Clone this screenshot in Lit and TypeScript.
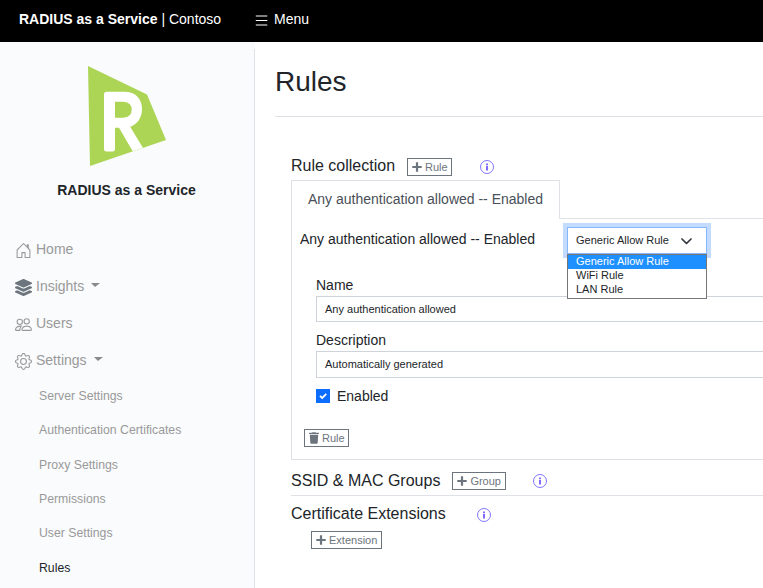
import { LitElement, html, css, svg } from "lit";
import { customElement, property } from "lit/decorators.js";

const icons: Record<string, unknown> = {
  home: svg`<svg viewBox="0 0 16 16" fill="#999"><path d="M7.646 1.146a.5.5 0 0 1 .708 0l6 6a.5.5 0 0 1 .146.354v7a.5.5 0 0 1-.5.5H9.5a.5.5 0 0 1-.5-.5v-4H7v4a.5.5 0 0 1-.5.5H2a.5.5 0 0 1-.5-.5v-7a.5.5 0 0 1 .146-.354l6-6zM2.5 7.707V14H6v-4a.5.5 0 0 1 .5-.5h3a.5.5 0 0 1 .5.5v4h3.5V7.707L8 2.207l-5.5 5.5z"/><path d="M13 2.5V6l-2-2V2.5a.5.5 0 0 1 .5-.5h1a.5.5 0 0 1 .5.5z"/></svg>`,
  insights: svg`<svg viewBox="0 0 512 512" fill="#6c757d"><path d="M12.41 148.02l232.94 105.67c6.8 3.09 14.49 3.09 21.29 0l232.94-105.67c16.55-7.51 16.55-32.52 0-40.03L266.65 2.31a25.607 25.607 0 0 0-21.29 0L12.41 107.98c-16.55 7.51-16.55 32.53 0 40.04zm487.18 88.28l-58.09-26.33-161.64 73.27c-7.56 3.43-15.59 5.17-23.86 5.17s-16.29-1.74-23.86-5.17L70.51 209.97l-58.1 26.33c-16.55 7.5-16.55 32.5 0 40l232.94 105.59c6.8 3.08 14.49 3.08 21.29 0L499.59 276.3c16.55-7.5 16.55-32.5 0-40zm0 127.8l-57.87-26.23-161.86 73.37c-7.56 3.43-15.59 5.17-23.86 5.17s-16.29-1.74-23.86-5.17L70.29 337.87 12.41 364.1c-16.55 7.5-16.55 32.5 0 40l232.94 105.59c6.8 3.08 14.49 3.08 21.29 0L499.59 404.1c16.55-7.5 16.55-32.5 0-40z"/></svg>`,
  users: svg`<svg viewBox="0 0 16 16" fill="#999"><path fill-rule="evenodd" d="M15 14s1 0 1-1-1-4-5-4-5 3-5 4 1 1 1 1h8zm-7.978-1A.261.261 0 0 1 7 12.996c.001-.264.167-1.03.76-1.72C8.312 10.629 9.282 10 11 10c1.717 0 2.687.63 3.24 1.276.593.69.758 1.457.76 1.72l-.008.002a.274.274 0 0 1-.014.002H7.022zM11 7a2 2 0 1 0 0-4 2 2 0 0 0 0 4zm3-2a3 3 0 1 1-6 0 3 3 0 0 1 6 0zM6.936 9.28a5.88 5.88 0 0 0-1.23-.247A7.35 7.35 0 0 0 5 9c-4 0-5 3-5 4 0 .667.333 1 1 1h4.216A2.238 2.238 0 0 1 5 13c0-1.01.377-2.042 1.09-2.904.243-.294.526-.569.846-.816zM4.92 10A5.493 5.493 0 0 0 4 13H1c0-.26.164-1.03.76-1.724.545-.636 1.492-1.256 3.16-1.275zM1.5 5.5a3 3 0 1 1 6 0 3 3 0 0 1-6 0zm3-2a2 2 0 1 0 0 4 2 2 0 0 0 0-4z"/></svg>`,
  settings: svg`<svg viewBox="0 0 16 16" fill="#999"><path d="M8 4.754a3.246 3.246 0 1 0 0 6.492 3.246 3.246 0 0 0 0-6.492zM5.754 8a2.246 2.246 0 1 1 4.492 0 2.246 2.246 0 0 1-4.492 0z"/><path d="M9.796 1.343c-.527-1.79-3.065-1.79-3.592 0l-.094.319a.873.873 0 0 1-1.255.52l-.292-.16c-1.64-.892-3.433.902-2.54 2.541l.159.292a.873.873 0 0 1-.52 1.255l-.319.094c-1.79.527-1.79 3.065 0 3.592l.319.094a.873.873 0 0 1 .52 1.255l-.16.292c-.892 1.64.901 3.434 2.541 2.54l.292-.159a.873.873 0 0 1 1.255.52l.094.319c.527 1.79 3.065 1.79 3.592 0l.094-.319a.873.873 0 0 1 1.255-.52l.292.16c1.64.893 3.434-.902 2.54-2.541l-.159-.292a.873.873 0 0 1 .52-1.255l.319-.094c1.79-.527 1.79-3.065 0-3.592l-.319-.094a.873.873 0 0 1-.52-1.255l.16-.292c.893-1.64-.902-3.433-2.541-2.54l-.292.159a.873.873 0 0 1-1.255-.52l-.094-.319zm-2.633.283c.246-.835 1.428-.835 1.674 0l.094.319a1.873 1.873 0 0 0 2.693 1.115l.291-.16c.764-.415 1.6.42 1.184 1.185l-.159.292a1.873 1.873 0 0 0 1.116 2.692l.318.094c.835.246.835 1.428 0 1.674l-.319.094a1.873 1.873 0 0 0-1.115 2.693l.16.291c.415.764-.42 1.6-1.185 1.184l-.291-.159a1.873 1.873 0 0 0-2.693 1.116l-.094.318c-.246.835-1.428.835-1.674 0l-.094-.319a1.873 1.873 0 0 0-2.692-1.115l-.292.16c-.764.415-1.6-.42-1.184-1.185l.159-.291A1.873 1.873 0 0 0 1.945 8.93l-.319-.094c-.835-.246-.835-1.428 0-1.674l.319-.094A1.873 1.873 0 0 0 3.06 4.377l-.16-.292c-.415-.764.42-1.6 1.185-1.184l.292.159a1.873 1.873 0 0 0 2.692-1.115l.094-.319z"/></svg>`,
  plus: svg`<svg viewBox="0 0 10 10" fill="#6c757d"><path d="M3.900 0.300h2.200v3.600H9.700v2.200H6.100V9.700H3.900V6.100H.3V3.900h3.600z"/></svg>`,
  trash: svg`<svg viewBox="0 0 10 12" fill="#6c757d"><path d="M0 1.300Q0 .8.5.8H3L3.500.2h3L7 .8h2.500q.5 0 .5.5V2H0zM.8 2.800h8.400L8.700 10.800q-.1.900-1 .900H2.300q-.9 0-1-.9z"/></svg>`,
  info: svg`<svg viewBox="0 0 14 14"><circle cx="7" cy="7" r="6.500" fill="none" stroke="#4a3cff" stroke-width=".7"/><path d="M6.300 3.500h1.400v1.400H6.300zM6.300 5.800h1.400V10.500H6.300z" fill="#4a2cff"/></svg>`,
};

@customElement("outline-button")
export class OutlineButton extends LitElement {
  @property() icon = "plus";
  @property() label = "";

  static styles = css`
    :host { display: block; flex: none; }
    .button {
      display: flex; align-items: center; box-sizing: border-box; width: 100%; height: 18px;
      padding: 0 0 0 4px; border: 1px solid #6c757d; background: #fff; margin: 0;
      color: #6c757d; font: 11px/16px "Liberation Sans", Arial, sans-serif; white-space: nowrap;
    }
    .icon { display: flex; flex: none; width: 10px; height: 10px; margin-right: 3px; }
    .icon.trash { height: 12px; }
    .icon svg { width: 100%; height: 100%; }
  `;

  render() {
    return html`<button class="button"><span class="icon ${this.icon}">${icons[this.icon]}</span>${this.label}</button>`;
  }
}

@customElement("app-root")
export class AppRoot extends LitElement {
  static styles = css`
    :host {
      display: block; height: 588px; overflow: hidden; background: #fff; color: #212529;
      font: 14px/21px "Liberation Sans", Arial, sans-serif;
    }
    * { box-sizing: border-box; }
    .topbar { display: flex; height: 42px; padding: 9px 0 0 19px; background: #000; color: #fff; }
    .brand { width: 236px; }
    .menu { display: flex; }
    .burger { width: 13px; height: 11px; margin: 6px 6px 0 0; }
    .body { display: flex; height: 546px; }
    .sidebar { flex: none; width: 255px; background: #f9fbfd; }
    .side-inner { height: 539px; margin-top: 7px; padding-top: 16px; border-right: 1px solid #dee2e6; }
    .logo { display: block; width: 80px; height: 102px; margin-left: 87px; }
    .product { width: 253px; margin-top: 13px; text-align: center; font-weight: bold; }
    .nav { display: flex; flex-direction: column; margin-top: 30px; }
    .item { display: flex; align-items: center; height: 37px; padding-left: 15px; color: #999; }
    .nav-icon { display: flex; width: 17px; height: 17px; margin: 1px 4px 0 0; }
    .nav-icon svg { width: 100%; height: 100%; }
    .caret { margin: -3px 0 0 7px; border: 0 solid transparent; border-top-color: #8a8a8a; border-width: 4px 5px 0 4px; }
    .sub { height: 34.300px; padding-left: 39px; font-size: 12.250px; line-height: 35px; color: #999; }
    .sub.active { padding-top: 1px; color: #212529; }
    .main { flex: 1; min-width: 0; padding-left: 20px; }
    h1 { height: 75px; margin: 0; padding-top: 23px; border-bottom: 1px solid #dee2e6; font-size: 28px; line-height: 34px; font-weight: normal; }
    .content { padding-left: 16px; }
    .heading { display: flex; font-size: 16px; line-height: 20px; }
    .info { width: 14px; height: 14px; display: flex; }
    .info svg { width: 100%; height: 100%; }
    .rules { height: 63px; padding-top: 39px; }
    .rules outline-button { width: 45px; margin: 2px 28px 0 12px; }
    .rules .info { margin-top: 4px; }
    .tabs { display: flex; height: 39px; }
    .tab { width: 269px; border: 1px solid #dee2e6; border-bottom: 0; padding: 8px 0 0 16px; color: #495057; }
    .tab-rest { flex: 1; border-bottom: 1px solid #dee2e6; }
    .panel { height: 241px; border: 1px solid #dee2e6; border-width: 0 0 1px 1px; padding-left: 8px; }
    .panel-head { display: flex; height: 56px; padding-top: 8px; line-height: 24px; }
    .summary { width: 267px; }
    .picker { position: relative; width: 140px; height: 27px; }
    .select {
      display: flex; align-items: center; justify-content: space-between; height: 27px; padding: 0 14px 2px 8px;
      border: 1px solid #86b7fe; background: #fff; box-shadow: 0 0 0 4px #c2dbfe; font-size: 11px;
    }
    .select svg { width: 11px; height: 7px; margin-top: 3px; }
    .options {
      position: absolute; top: 27px; left: 0; width: 140px; height: 45px; border: 1px solid #767676;
      background: #fff; font-size: 11px; line-height: 12px;
    }
    .option { height: 14px; padding-left: 8px; }
    .option.selected { background: #1e90ff; color: #fff; }
    .form { padding-left: 16px; }
    label { display: block; height: 21px; }
    .input { height: 26px; border: 1px solid #ced4da; border-right: 0; padding-left: 8px; font-size: 11px; line-height: 24px; }
    .input + label { margin-top: 8px; }
    .description { height: 27px; }
    .check { display: flex; margin-top: 8px; height: 21px; }
    .box { display: flex; width: 14px; height: 14px; margin: 3px 7px 0 0; background: #0d6efd; }
    .box svg { width: 14px; height: 14px; }
    .delete { display: flex; padding: 22px 0 0 4px; }
    .delete outline-button { width: 45px; }
    .groups { height: 36px; padding-top: 11px; border-bottom: 1px solid #dee2e6; }
    .groups outline-button { width: 54px; margin: 1px 27px 0 12px; }
    .groups .info { margin-top: 3px; }
    .extensions { padding-top: 8px; height: 35px; }
    .extensions .info { margin: 4px 0 0 31px; }
    .extension-action { display: flex; padding-left: 20px; }
    .extension-action outline-button { width: 71px; }
  `;

  private navItems = [
    { icon: "home", label: "Home", caret: false },
    { icon: "insights", label: "Insights", caret: true },
    { icon: "users", label: "Users", caret: false },
    { icon: "settings", label: "Settings", caret: true },
  ];
  private subItems = ["Server Settings", "Authentication Certificates", "Proxy Settings", "Permissions", "User Settings", "Rules"];
  private ruleTypes = ["Generic Allow Rule", "WiFi Rule", "LAN Rule"];

  render() {
    return html`
      <header class="topbar">
        <div class="brand"><b>RADIUS as a Service</b> | Contoso</div>
        <div class="menu">
          <svg class="burger" viewBox="0 0 13 11" stroke="#fff"><path d="M.8 1h11.500M.8 5.500h11.500M.8 10h11.500"/></svg>Menu
        </div>
      </header>
      <div class="body">
        <aside class="sidebar">
          <div class="side-inner">
            <svg class="logo" viewBox="0 0 80 102">
              <path d="M1 1L60 29.500L79 75L3 101z" fill="#add555"/>
              <path d="M17 29.500q0-2.800 2.800-2.800H37C49 26.700 55 34 55 44C55 53 50 59.500 43.200 61.700L55.900 82.700L45.700 86.300L32 62.700H28V84q0 2.500-2.500 2.500h-6q-2.500 0-2.500-2.500zM28 36.700V52.700H36.500Q44.700 52 44.700 44.700T36.500 36.700z" fill="#fff" fill-rule="evenodd"/>
            </svg>
            <div class="product">RADIUS as a Service</div>
            <nav class="nav">
              ${this.navItems.map((n) => html`<div class="item"><span class="nav-icon">${icons[n.icon]}</span>${n.label}${n.caret ? html`<span class="caret"></span>` : ""}</div>`)}
              ${this.subItems.map((s) => html`<div class="sub ${s === "Rules" ? "active" : ""}">${s}</div>`)}
            </nav>
          </div>
        </aside>
        <main class="main">
          <h1>Rules</h1>
          <div class="content">
            <div class="heading rules">Rule collection<outline-button label="Rule"></outline-button><span class="info">${icons.info}</span></div>
            <div class="tabs"><div class="tab">Any authentication allowed -- Enabled</div><div class="tab-rest"></div></div>
            <section class="panel">
              <div class="panel-head">
                <div class="summary">Any authentication allowed -- Enabled</div>
                <div class="picker">
                  <div class="select">Generic Allow Rule
                    <svg viewBox="0 0 11 7" fill="none" stroke="#343a40" stroke-width="1.700" stroke-linecap="round" stroke-linejoin="round"><path d="M1 1L5.500 5.500L10 1"/></svg>
                  </div>
                  <div class="options">${this.ruleTypes.map((t, i) => html`<div class="option ${i === 0 ? "selected" : ""}">${t}</div>`)}</div>
                </div>
              </div>
              <div class="form">
                <label>Name</label>
                <div class="input">Any authentication allowed</div>
                <label>Description</label>
                <div class="input description">Automatically generated</div>
                <div class="check">
                  <span class="box"><svg viewBox="0 0 14 14" fill="none" stroke="#fff" stroke-width="1.800"><path d="M4 6.800L6.200 9L10.300 4.900"/></svg></span>Enabled
                </div>
              </div>
              <div class="delete"><outline-button icon="trash" label="Rule"></outline-button></div>
            </section>
            <div class="heading groups">SSID &amp; MAC Groups<outline-button label="Group"></outline-button><span class="info">${icons.info}</span></div>
            <div class="heading extensions">Certificate Extensions<span class="info">${icons.info}</span></div>
            <div class="extension-action"><outline-button label="Extension"></outline-button></div>
          </div>
        </main>
      </div>
    `;
  }
}
